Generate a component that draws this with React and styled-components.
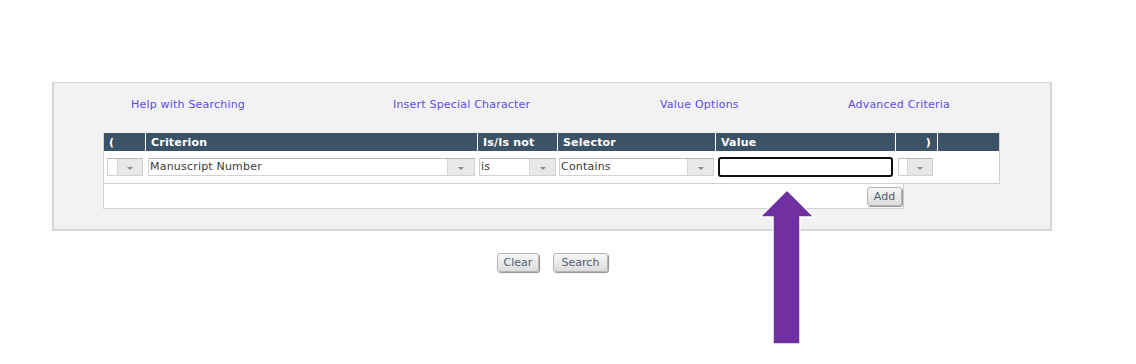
import React from 'react';
import styled, { createGlobalStyle } from 'styled-components';

const GlobalStyle = createGlobalStyle`
  body {
    margin: 0;
    background: #ffffff;
    font-family: "DejaVu Sans", Verdana, sans-serif;
  }
`;

const Page = styled.div`
  position: relative;
  width: 1136px;
  height: 364px;
  padding: 82px 0 0 52px;
  box-sizing: border-box;
`;

const Panel = styled.div`
  width: 1000px;
  box-sizing: border-box;
  background: #f2f2f2;
  border: 2px solid #d6d6d6;
  border-top-width: 1px;
  padding: 15px 0 20px 0;
`;

const LinkRow = styled.div`
  display: grid;
  grid-template-columns: 262px 267px 188px auto;
  padding-left: 77px;
`;

const HelpLink = styled.a`
  font-size: 11px;
  line-height: 14px;
  letter-spacing: 0.2px;
  color: #5b4de6;
  text-decoration: none;
  cursor: pointer;
`;

const Criteria = styled.div`
  margin: 21px 0 0 49px;
`;

const Table = styled.div`
  width: 897px;
  box-sizing: border-box;
  border: 1px solid #d0d0d0;
  border-top: none;
  background: #ffffff;
`;

const columns = '41px 331px 79px 157px 179px 41px 1fr';

const HeadRow = styled.div`
  display: grid;
  grid-template-columns: ${columns};
  column-gap: 1px;
  background: #ffffff;
`;

const HeadCell = styled.div`
  height: 18px;
  background: #3c5266;
  color: #ffffff;
  font-weight: bold;
  font-size: 11px;
  line-height: 19px;
  letter-spacing: 0.2px;
  padding: 0 ${(p) => (p.$right ? '6px' : '0')} 0 5px;
  text-align: ${(p) => (p.$right ? 'right' : 'left')};
`;

const DataRow = styled.div`
  display: grid;
  grid-template-columns: ${columns};
  column-gap: 1px;
  height: 32px;
  align-items: center;
`;

const DataCell = styled.div`
  padding-left: ${(p) => p.$pad || 3}px;
  display: flex;
  align-items: center;
`;

const SelectBox = styled.div`
  display: flex;
  width: ${(p) => p.$w}px;
  height: 18px;
  box-sizing: border-box;
  border: 1px solid #d2d2d2;
  border-top-color: #b8b8b8;
  background: #ffffff;
`;

const SelectText = styled.div`
  flex: 1;
  font-size: 11px;
  line-height: 16px;
  letter-spacing: 0.2px;
  color: #3a3a3a;
  padding-left: 1px;
  white-space: nowrap;
  overflow: hidden;
`;

const SelectArrow = styled.div`
  width: ${(p) => p.$w || 24}px;
  background: #e8e8e8;
  border-left: 1px solid #d6d6d6;
  display: flex;
  align-items: center;
  justify-content: center;
  &::after {
    content: '';
    border-left: 3px solid transparent;
    border-right: 3px solid transparent;
    border-top: 3px solid #8a8a8a;
    margin-top: 2px;
  }
`;

const ValueInput = styled.div`
  width: 175px;
  height: 20px;
  box-sizing: border-box;
  border: 2px solid #111111;
  border-radius: 3px;
  background: #ffffff;
`;

const AddBox = styled.div`
  width: 801px;
  height: 25px;
  box-sizing: border-box;
  border: 1px solid #d0d0d0;
  border-top: none;
  background: #ffffff;
  display: flex;
  align-items: center;
  justify-content: flex-end;
  padding-right: 1px;
`;

const Button = styled.button`
  height: 19px;
  width: ${(p) => p.$w}px;
  padding: 0;
  box-sizing: border-box;
  font-family: "DejaVu Sans", Verdana, sans-serif;
  font-size: 11px;
  color: #4e6072;
  background: linear-gradient(#f7f7f7, #dcdcdc);
  border: 1px solid #b4b4b4;
  border-radius: 3px;
  box-shadow: 1px 1px 1px #8f8f8f;
  cursor: pointer;
`;

const ButtonBar = styled.div`
  width: 1000px;
  display: flex;
  justify-content: center;
  gap: 14px;
  margin-top: 22px;
  padding-left: 1px;
  box-sizing: border-box;
`;

const Arrow = styled.svg`
  position: absolute;
  left: 755px;
  top: 186px;
`;

function Select({ w, text, arrow }) {
  return (
    <SelectBox $w={w}>
      <SelectText>{text}</SelectText>
      <SelectArrow $w={arrow} />
    </SelectBox>
  );
}

function App() {
  return (
    <Page>
      <GlobalStyle />
      <Panel>
        <LinkRow>
          <HelpLink>Help with Searching</HelpLink>
          <HelpLink>Insert Special Character</HelpLink>
          <HelpLink>Value Options</HelpLink>
          <HelpLink>Advanced Criteria</HelpLink>
        </LinkRow>
        <Criteria>
          <Table>
            <HeadRow>
              <HeadCell>(</HeadCell>
              <HeadCell>Criterion</HeadCell>
              <HeadCell>Is/Is not</HeadCell>
              <HeadCell>Selector</HeadCell>
              <HeadCell>Value</HeadCell>
              <HeadCell $right>)</HeadCell>
              <HeadCell />
            </HeadRow>
            <DataRow>
              <DataCell $pad={3}><Select w={36} text="" /></DataCell>
              <DataCell $pad={2}><Select w={327} text="Manuscript Number" arrow={26} /></DataCell>
              <DataCell $pad={1}><Select w={77} text="is" arrow={25} /></DataCell>
              <DataCell $pad={1}><Select w={155} text="Contains" arrow={25} /></DataCell>
              <DataCell $pad={2}><ValueInput /></DataCell>
              <DataCell $pad={2}><Select w={35} text="" /></DataCell>
              <DataCell />
            </DataRow>
          </Table>
          <AddBox>
            <Button $w={35}>Add</Button>
          </AddBox>
        </Criteria>
      </Panel>
      <ButtonBar>
        <Button $w={42}>Clear</Button>
        <Button $w={55}>Search</Button>
      </ButtonBar>
      <Arrow width="66" height="160" viewBox="755 186 66 160">
        <polygon
          points="787,190 814,217 800,217 800,344 773,344 773,217 760,217"
          fill="#7030a0"
          stroke="#ffffff"
          strokeWidth="1.5"
          strokeLinejoin="miter"
        />
      </Arrow>
    </Page>
  );
}

export default App;
